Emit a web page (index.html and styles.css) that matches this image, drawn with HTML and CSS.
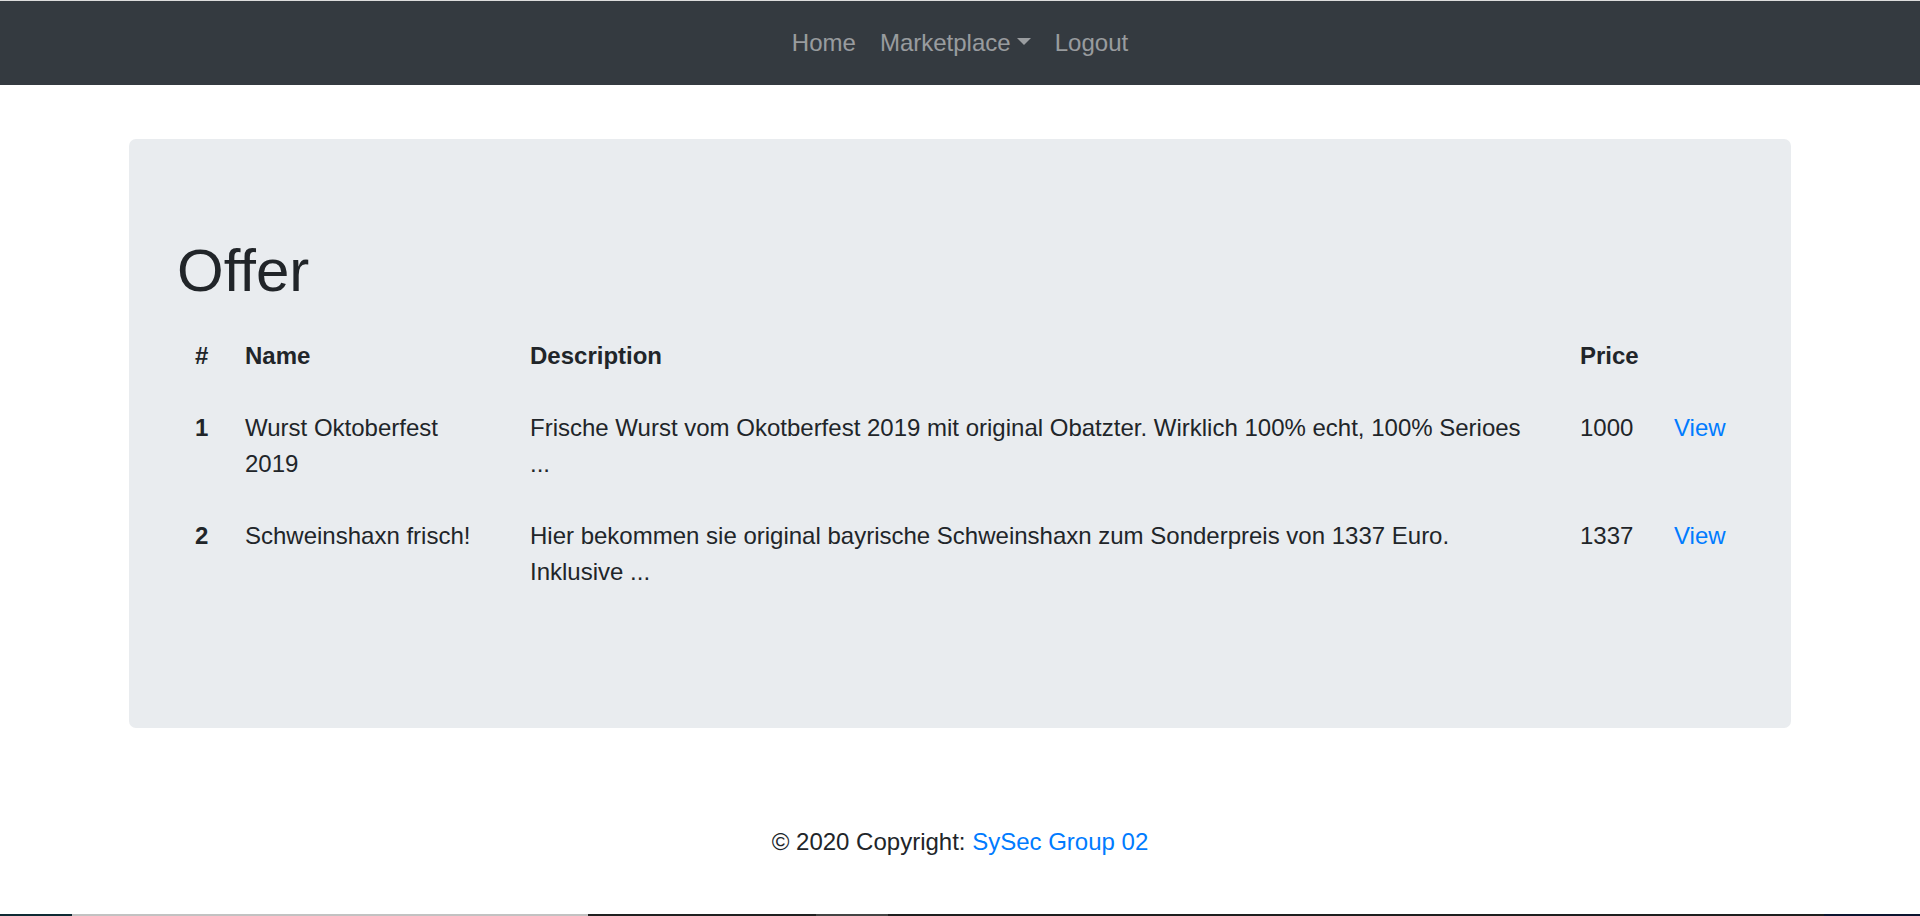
FILE: index.html
```html
<!DOCTYPE html>
<html lang="en">
<head>
<meta charset="utf-8">
<title>Offer</title>
<link rel="stylesheet" href="styles.css">
</head>
<body>
<nav class="navbar">
  <ul class="nav">
    <li><a class="nav-link" href="#">Home</a></li>
    <li><a class="nav-link dropdown-toggle" href="#">Marketplace</a></li>
    <li><a class="nav-link" href="#">Logout</a></li>
  </ul>
</nav>
<main class="container">
  <div class="jumbotron">
    <h1 class="title">Offer</h1>
    <table class="offers">
      <colgroup>
        <col class="c-num"><col class="c-name"><col class="c-desc"><col class="c-price"><col class="c-view">
      </colgroup>
      <thead>
        <tr><th>#</th><th>Name</th><th>Description</th><th>Price</th><th></th></tr>
      </thead>
      <tbody>
        <tr>
          <th>1</th>
          <td>Wurst Oktoberfest 2019</td>
          <td>Frische Wurst vom Okotberfest 2019 mit original Obatzter. Wirklich 100% echt, 100% Serioes ...</td>
          <td>1000</td>
          <td><a class="link" href="#">View</a></td>
        </tr>
        <tr>
          <th>2</th>
          <td>Schweinshaxn frisch!</td>
          <td>Hier bekommen sie original bayrische Schweinshaxn zum Sonderpreis von 1337 Euro. Inklusive ...</td>
          <td>1337</td>
          <td><a class="link" href="#">View</a></td>
        </tr>
      </tbody>
    </table>
  </div>
</main>
<footer class="footer">© 2020 Copyright: <a class="link" href="#">SySec Group 02</a></footer>
<div class="taskbar"></div>
</body>
</html>
```
FILE: styles.css
```css
html, body {
  margin: 0;
  padding: 0;
}
body {
  font-family: "Liberation Sans", Arial, sans-serif;
  font-size: 24px;
  line-height: 1.5;
  color: #212529;
  background: #fff;
  border-top: 1px solid #dcdcdc;
}
.navbar {
  background: #343a40;
  padding: 12px 24px;
}
.nav {
  list-style: none;
  margin: 0;
  padding: 0;
  display: flex;
  justify-content: center;
}
.nav-link {
  display: block;
  padding: 12px;
  color: rgba(255, 255, 255, 0.5);
  text-decoration: none;
}
.dropdown-toggle::after {
  content: "";
  display: inline-block;
  margin-left: 0.255em;
  vertical-align: 0.255em;
  border-top: 0.3em solid;
  border-right: 0.3em solid transparent;
  border-left: 0.3em solid transparent;
  border-bottom: 0;
}
.container {
  max-width: 1662px;
  margin: 0 auto;
  padding-top: 54px;
}
.jumbotron {
  background: #e9ecef;
  border-radius: 7px;
  padding: 96px 48px;
  margin-bottom: 48px;
}
.title {
  font-size: 60px;
  font-weight: 400;
  line-height: 1.2;
  margin: 0 0 13px;
}
.offers {
  width: 100%;
  border-collapse: collapse;
  table-layout: fixed;
  margin-bottom: 24px;
}
.c-num { width: 50px; }
.c-name { width: 285px; }
.c-desc { width: 1050px; }
.c-price { width: 94px; }
.c-view { width: 87px; }
.offers th,
.offers td {
  padding: 18px;
  text-align: left;
  vertical-align: top;
}
.offers thead th {
  vertical-align: bottom;
  font-weight: 700;
}
.offers tbody th {
  font-weight: 700;
}
.link {
  color: #007bff;
  text-decoration: none;
}
.footer {
  text-align: center;
  padding: 48px 0 24px;
}
.taskbar {
  position: fixed;
  left: 0;
  right: 0;
  bottom: 0;
  height: 2px;
  background: linear-gradient(to right, #0e2a33 0, #0e2a33 72px, #c2c2c2 72px, #c2c2c2 588px, #202020 588px, #202020 816px, #444 816px, #444 888px, #1e1e1e 888px, #1e1e1e 1824px, #0c1530 1824px);
}
```
